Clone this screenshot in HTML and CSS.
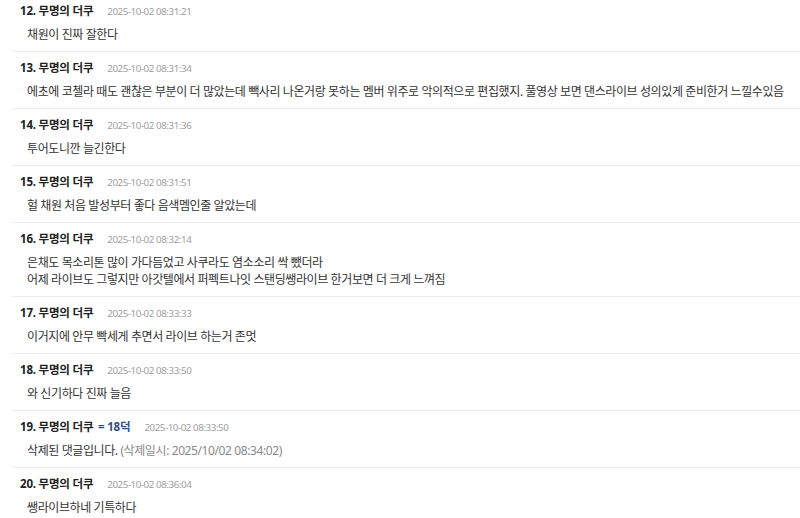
FILE: index.html
```html
<!DOCTYPE html>
<html lang="ko">
<head>
<meta charset="utf-8">
<link rel="stylesheet" href="styles.css">
</head>
<body>
<ul class="list">
  <li class="item">
    <div class="head"><span class="name">12. 무명의 더쿠</span><span class="date">2025-10-02 08:31:21</span></div>
    <div class="body">채원이 진짜 잘한다</div>
  </li>
  <li class="item">
    <div class="head"><span class="name">13. 무명의 더쿠</span><span class="date">2025-10-02 08:31:34</span></div>
    <div class="body">에초에 코첼라 때도 괜찮은 부분이 더 많았는데 빽사리 나온거랑 못하는 멤버 위주로 악의적으로 편집했지. 풀영상 보면 댄스라이브 성의있게 준비한거 느낄수있음</div>
  </li>
  <li class="item">
    <div class="head"><span class="name">14. 무명의 더쿠</span><span class="date">2025-10-02 08:31:36</span></div>
    <div class="body">투어도니깐 늘긴한다</div>
  </li>
  <li class="item">
    <div class="head"><span class="name">15. 무명의 더쿠</span><span class="date">2025-10-02 08:31:51</span></div>
    <div class="body">헐 채원 처음 발성부터 좋다 음색멤인줄 알았는데</div>
  </li>
  <li class="item">
    <div class="head"><span class="name">16. 무명의 더쿠</span><span class="date">2025-10-02 08:32:14</span></div>
    <div class="body">은채도 목소리톤 많이 가다듬었고 사쿠라도 염소소리 싹 뺐더라<br>어제 라이브도 그렇지만 아갓텔에서 퍼펙트나잇 스탠딩쌩라이브 한거보면 더 크게 느껴짐</div>
  </li>
  <li class="item">
    <div class="head"><span class="name">17. 무명의 더쿠</span><span class="date">2025-10-02 08:33:33</span></div>
    <div class="body">이거지에 안무 빡세게 추면서 라이브 하는거 존멋</div>
  </li>
  <li class="item">
    <div class="head"><span class="name">18. 무명의 더쿠</span><span class="date">2025-10-02 08:33:50</span></div>
    <div class="body">와 신기하다 진짜 늘음</div>
  </li>
  <li class="item">
    <div class="head"><span class="name">19. 무명의 더쿠 <span class="reply">= 18덕</span></span><span class="date">2025-10-02 08:33:50</span></div>
    <div class="body">삭제된 댓글입니다. <span class="deleted">(삭제일시: 2025/10/02 08:34:02)</span></div>
  </li>
  <li class="item">
    <div class="head"><span class="name">20. 무명의 더쿠</span><span class="date">2025-10-02 08:36:04</span></div>
    <div class="body">쌩라이브하네 기특하다</div>
  </li>
</ul>
</body>
</html>
```
FILE: styles.css
```css
html, body {
  margin: 0;
  padding: 0;
  background: #fff;
  overflow: hidden;
}
body {
  font-family: "Noto Sans", "Noto Sans CJK KR", sans-serif;
  color: #333;
}
.list {
  list-style: none;
  margin: -5px 0 0 12px;
  padding: 0;
}
.item {
  padding: 8px 0 8px 8px;
  border-bottom: 1px solid #ececec;
}
.head {
  display: flex;
  align-items: baseline;
  gap: 14px;
  line-height: 16px;
  white-space: nowrap;
}
.name {
  font-size: 11.5px;
  font-weight: 700;
  letter-spacing: -0.2px;
  color: #222;
}
.reply {
  color: #2f4f83;
  margin-left: 2px;
}
.date {
  font-size: 9.8px;
  letter-spacing: -0.45px;
  color: #a0a0a0;
}
.body {
  margin-top: 6px;
  padding-left: 7px;
  font-size: 12px;
  letter-spacing: -0.4px;
  line-height: 17px;
  color: #333;
  white-space: nowrap;
}
.deleted {
  color: #8a8a8a;
}
```
